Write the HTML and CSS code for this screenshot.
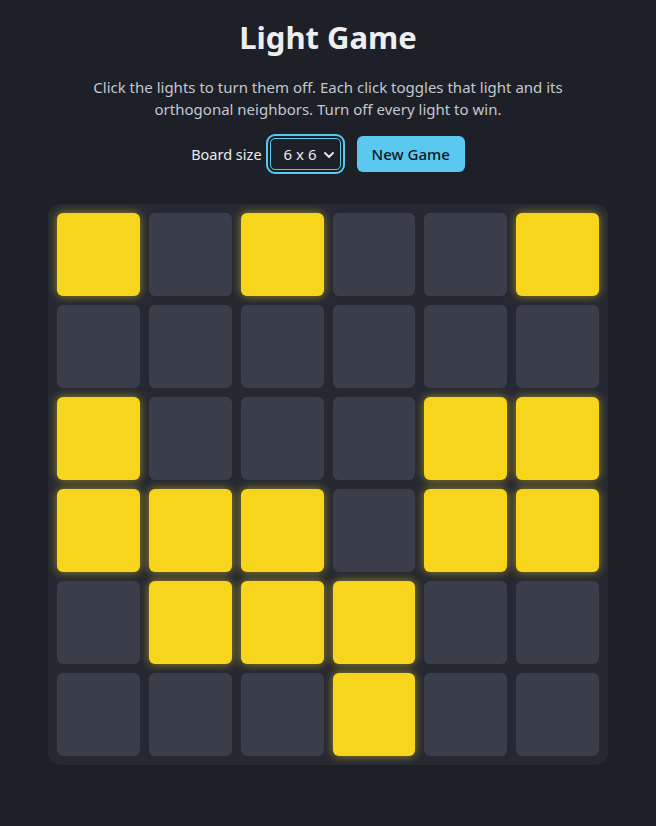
FILE: index.html
```html
<!DOCTYPE html>
<html>
<head>
<meta charset="utf-8">
<link rel="stylesheet" href="styles.css">
</head>
<body>
<main class="app">
  <h1 class="title">Light Game</h1>
  <p class="desc">Click the lights to turn them off. Each click toggles that light and its orthogonal neighbors. Turn off every light to win.</p>
  <div class="controls">
    <label class="label" for="size">Board size</label>
    <div class="select-wrap">
      <select id="size" class="select">
        <option>6 x 6</option>
      </select>
      <svg class="chev" viewBox="0 0 10 6" width="10" height="6"><path d="M1 1l4 4 4-4" fill="none" stroke="#e8eaee" stroke-width="1.8" stroke-linecap="round" stroke-linejoin="round"/></svg>
    </div>
    <button class="btn">New Game</button>
  </div>
  <div class="board">
    <div class="cell on"></div><div class="cell"></div><div class="cell on"></div><div class="cell"></div><div class="cell"></div><div class="cell on"></div>
    <div class="cell"></div><div class="cell"></div><div class="cell"></div><div class="cell"></div><div class="cell"></div><div class="cell"></div>
    <div class="cell on"></div><div class="cell"></div><div class="cell"></div><div class="cell"></div><div class="cell on"></div><div class="cell on"></div>
    <div class="cell on"></div><div class="cell on"></div><div class="cell on"></div><div class="cell"></div><div class="cell on"></div><div class="cell on"></div>
    <div class="cell"></div><div class="cell on"></div><div class="cell on"></div><div class="cell on"></div><div class="cell"></div><div class="cell"></div>
    <div class="cell"></div><div class="cell"></div><div class="cell"></div><div class="cell on"></div><div class="cell"></div><div class="cell"></div>
  </div>
</main>
</body>
</html>
```
FILE: styles.css
```css
html, body {
  margin: 0;
  padding: 0;
  background: #1e2028;
}
body {
  font-family: "Noto Sans", "Open Sans", sans-serif;
  color: #e8eaee;
}
.app {
  width: 560px;
  margin: 0 auto;
  padding-top: 16px;
  display: flex;
  flex-direction: column;
  align-items: center;
}
.title {
  margin: 0;
  font-size: 31px;
  font-weight: 700;
  line-height: 42px;
  color: #eceef2;
}
.desc {
  margin: 19px 0 0;
  width: 500px;
  text-align: center;
  font-size: 15px;
  line-height: 21.5px;
  color: #c3c7cf;
}
.controls {
  margin-top: 16px;
  display: flex;
  align-items: center;
  gap: 6px;
}
.label {
  font-size: 14.5px;
  color: #e8eaee;
}
.select-wrap {
  position: relative;
  margin-right: 8px;
}
.select {
  appearance: none;
  -webkit-appearance: none;
  width: 71px;
  height: 32px;
  margin: 2px;
  padding: 0 0 0 13px;
  background: #1e2028;
  color: #e8eaee;
  border: 1px solid #5bc8f0;
  border-radius: 5px;
  outline: 2px solid #5bc8f0;
  outline-offset: 2px;
  font-family: inherit;
  font-size: 15px;
}
.chev {
  position: absolute;
  right: 9px;
  top: 16px;
  pointer-events: none;
}
.btn {
  height: 36px;
  padding: 0 15px;
  background: #5bc8f0;
  color: #12161e;
  border: none;
  border-radius: 6px;
  font-family: inherit;
  font-size: 15px;
  font-weight: 500;
}
.board {
  margin-top: 32px;
  width: 560px;
  box-sizing: border-box;
  padding: 9px;
  background: #262932;
  border-radius: 12px;
  display: grid;
  grid-template-columns: repeat(6, 1fr);
  gap: 9px;
}
.cell {
  height: 83px;
  background: #3a3e4a;
  border-radius: 6px;
}
.cell.on {
  background: #f8d51d;
  box-shadow: 0 0 10px rgba(248, 213, 29, 0.55);
}
```
